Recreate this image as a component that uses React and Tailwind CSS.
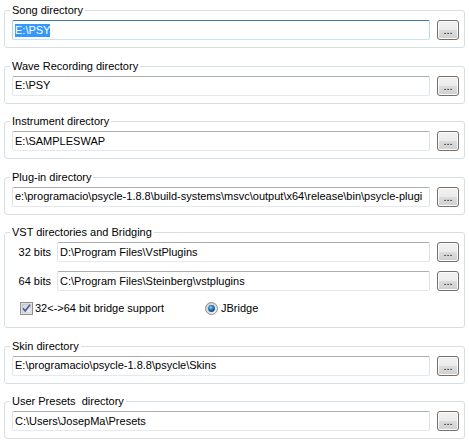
import React from 'react';

const GROUPS_TOP = [
  { label: 'Song directory', value: 'E:\\PSY', focused: true },
  { label: 'Wave Recording directory', value: 'E:\\PSY' },
  { label: 'Instrument directory', value: 'E:\\SAMPLESWAP' },
  {
    label: 'Plug-in directory',
    value: 'e:\\programacio\\psycle-1.8.8\\build-systems\\msvc\\output\\x64\\release\\bin\\psycle-plugi',
  },
];

const GROUPS_BOTTOM = [
  { label: 'Skin directory', value: 'E:\\programacio\\psycle-1.8.8\\psycle\\Skins' },
  { label: 'User Presets  directory', value: 'C:\\Users\\JosepMa\\Presets' },
];

function TextBox({ value, focused }) {
  return (
    <div
      className={`flex-1 min-w-0 h-[20px] flex items-center pl-[2px] overflow-hidden whitespace-pre border rounded-[2px] bg-white ${
        focused
          ? 'border-t-[#3d7bad] border-l-[#b5cfe7] border-r-[#b7d9ed] border-b-[#c7e2f1]'
          : 'border-t-[#abadb3] border-l-[#e2e3ea] border-r-[#dbdfe6] border-b-[#e3e9ef]'
      }`}
    >
      {focused ? (
        <span className="bg-[#3399ff] text-white leading-[13px]">{value}</span>
      ) : (
        <span className="leading-[13px]">{value}</span>
      )}
    </div>
  );
}

function BrowseButton() {
  return (
    <button
      type="button"
      className="w-[22px] h-[20px] shrink-0 flex items-center justify-center border border-[#707070] rounded-[3px] bg-[linear-gradient(#f2f2f2_0%,#ebebeb_50%,#dddddd_51%,#cfcfcf_100%)] shadow-[inset_0_0_0_1px_#fcfcfc] text-black leading-[13px] pt-[1px]"
    >
      ...
    </button>
  );
}

function Group({ label, children, className = '' }) {
  return (
    <fieldset className={`min-w-0 border border-[#d5dfe5] rounded-[3px] pl-[5px] pr-[5px] pt-[3px] ${className}`}>
      <legend className="px-[2px] leading-[13px] whitespace-pre">{label}</legend>
      {children}
    </fieldset>
  );
}

function PathGroup({ label, value, focused }) {
  return (
    <Group label={label} className="pb-[7px]">
      <div className="flex items-center pl-[2px] gap-[7px]">
        <TextBox value={value} focused={focused} />
        <BrowseButton />
      </div>
    </Group>
  );
}

function CheckBox() {
  return (
    <svg width="13" height="13" viewBox="0 0 13 13" className="shrink-0">
      <defs>
        <linearGradient id="cbg" x1="0" y1="0" x2="1" y2="1">
          <stop offset="0" stopColor="#cbcfd5" />
          <stop offset="1" stopColor="#f6f6f6" />
        </linearGradient>
      </defs>
      <rect x="0.5" y="0.5" width="12" height="12" fill="#f4f4f4" stroke="#8e8f8f" />
      <rect x="2" y="2" width="9" height="9" fill="url(#cbg)" stroke="#aeb3b9" strokeWidth="0.6" />
      <path d="M3 6.2 L5.2 9 L10 2.8" fill="none" stroke="#4a5f97" strokeWidth="1.7" strokeLinejoin="round" />
    </svg>
  );
}

function Radio() {
  return (
    <svg width="13" height="13" viewBox="0 0 13 13" className="shrink-0">
      <defs>
        <radialGradient id="rdot" cx="0.4" cy="0.35" r="0.7">
          <stop offset="0" stopColor="#8fd3f7" />
          <stop offset="0.45" stopColor="#2e7fc0" />
          <stop offset="1" stopColor="#0f3d6e" />
        </radialGradient>
        <linearGradient id="rring" x1="0" y1="0" x2="1" y2="1">
          <stop offset="0" stopColor="#c7c9cc" />
          <stop offset="1" stopColor="#f4f4f4" />
        </linearGradient>
      </defs>
      <circle cx="6.5" cy="6.5" r="6" fill="url(#rring)" stroke="#8e8f8f" />
      <circle cx="6.5" cy="6.5" r="3.4" fill="url(#rdot)" />
    </svg>
  );
}

export default function App() {
  return (
    <div className="w-[469px] h-[444px] bg-white px-[4px] pt-[4px] flex flex-col gap-[11.5px] font-['Liberation_Sans',Arial,sans-serif] text-[11px] text-black overflow-hidden">
      {GROUPS_TOP.map((g) => (
        <PathGroup key={g.label} {...g} />
      ))}

      <Group label="VST directories and Bridging" className="pb-[11px]">
        <div className="flex flex-col pl-[2px]">
          <div className="flex items-center gap-[7px]">
            <span className="w-[45px] text-right pr-[6px] -mr-[7px] shrink-0">32 bits</span>
            <TextBox value={'D:\\Program Files\\VstPlugins'} />
            <BrowseButton />
          </div>
          <div className="flex items-center gap-[7px] mt-[9px]">
            <span className="w-[45px] text-right pr-[6px] -mr-[7px] shrink-0">64 bits</span>
            <TextBox value={'C:\\Program Files\\Steinberg\\vstplugins'} />
            <BrowseButton />
          </div>
          <div className="flex items-center h-[16px] mt-[9px] pl-[8px]">
            <label className="w-[185px] flex items-center gap-[2px]">
              <CheckBox />
              <span>32&lt;-&gt;64 bit bridge support</span>
            </label>
            <label className="flex items-center gap-[3px]">
              <Radio />
              <span>JBridge</span>
            </label>
          </div>
        </div>
      </Group>

      {GROUPS_BOTTOM.map((g) => (
        <PathGroup key={g.label} {...g} />
      ))}
    </div>
  );
}
